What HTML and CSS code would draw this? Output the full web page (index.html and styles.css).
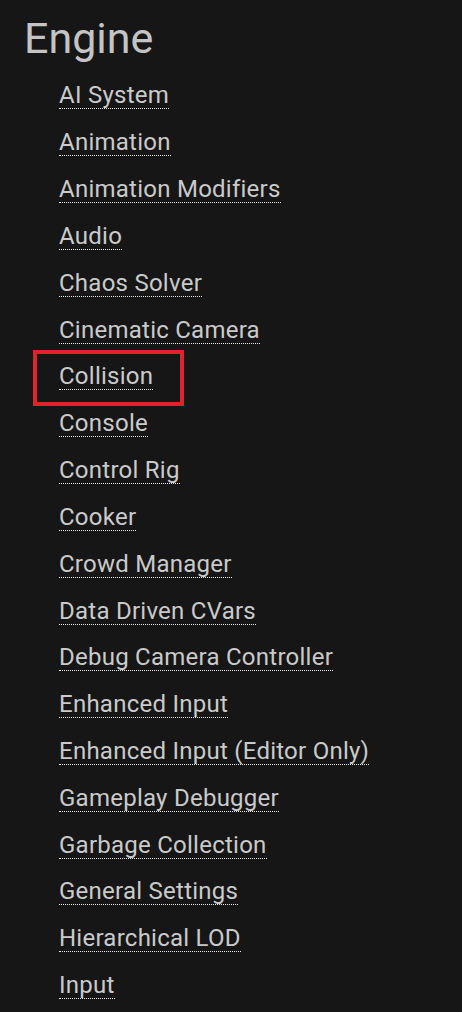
FILE: index.html
```html
<!DOCTYPE html>
<html>
<head>
<meta charset="utf-8">
<link rel="stylesheet" href="styles.css">
</head>
<body>
<div class="page">
  <h1 class="title">Engine</h1>
  <ul class="links">
    <li><a class="link">AI System</a></li>
    <li><a class="link">Animation</a></li>
    <li><a class="link">Animation Modifiers</a></li>
    <li><a class="link">Audio</a></li>
    <li><a class="link">Chaos Solver</a></li>
    <li><a class="link">Cinematic Camera</a></li>
    <li class="marked"><a class="link">Collision</a><span class="mark"></span></li>
    <li><a class="link">Console</a></li>
    <li><a class="link">Control Rig</a></li>
    <li><a class="link">Cooker</a></li>
    <li><a class="link">Crowd Manager</a></li>
    <li><a class="link">Data Driven CVars</a></li>
    <li><a class="link">Debug Camera Controller</a></li>
    <li><a class="link">Enhanced Input</a></li>
    <li><a class="link">Enhanced Input (Editor Only)</a></li>
    <li><a class="link">Gameplay Debugger</a></li>
    <li><a class="link">Garbage Collection</a></li>
    <li><a class="link">General Settings</a></li>
    <li><a class="link">Hierarchical LOD</a></li>
    <li><a class="link">Input</a></li>
  </ul>
</div>
</body>
</html>
```

FILE: styles.css
```css
html, body {
  margin: 0;
  padding: 0;
  background: #161616;
}
.page {
  font-family: Roboto, "Liberation Sans", sans-serif;
  color: #c9c9c9;
  padding: 0 0 0 24px;
}
.title {
  margin: 0;
  padding-top: 13px;
  font-size: 43px;
  font-weight: 400;
  line-height: 50px;
  color: #c4c4c4;
}
.links {
  list-style: none;
  margin: 9.4px 0 0 0;
  padding: 0 0 0 35px;
}
.links li {
  height: 46.84px;
  line-height: 46.84px;
  font-size: 24px;
  letter-spacing: 0.25px;
  position: relative;
}
.link {
  display: inline-block;
  vertical-align: baseline;
  line-height: 24px;
  color: #cacaca;
  border-bottom: 1px dotted #ededed;
  padding-bottom: 1px;
}
.mark {
  position: absolute;
  left: -26px;
  top: -3.7px;
  width: 143px;
  height: 48px;
  border: 4px solid #e3202b;
}
```
